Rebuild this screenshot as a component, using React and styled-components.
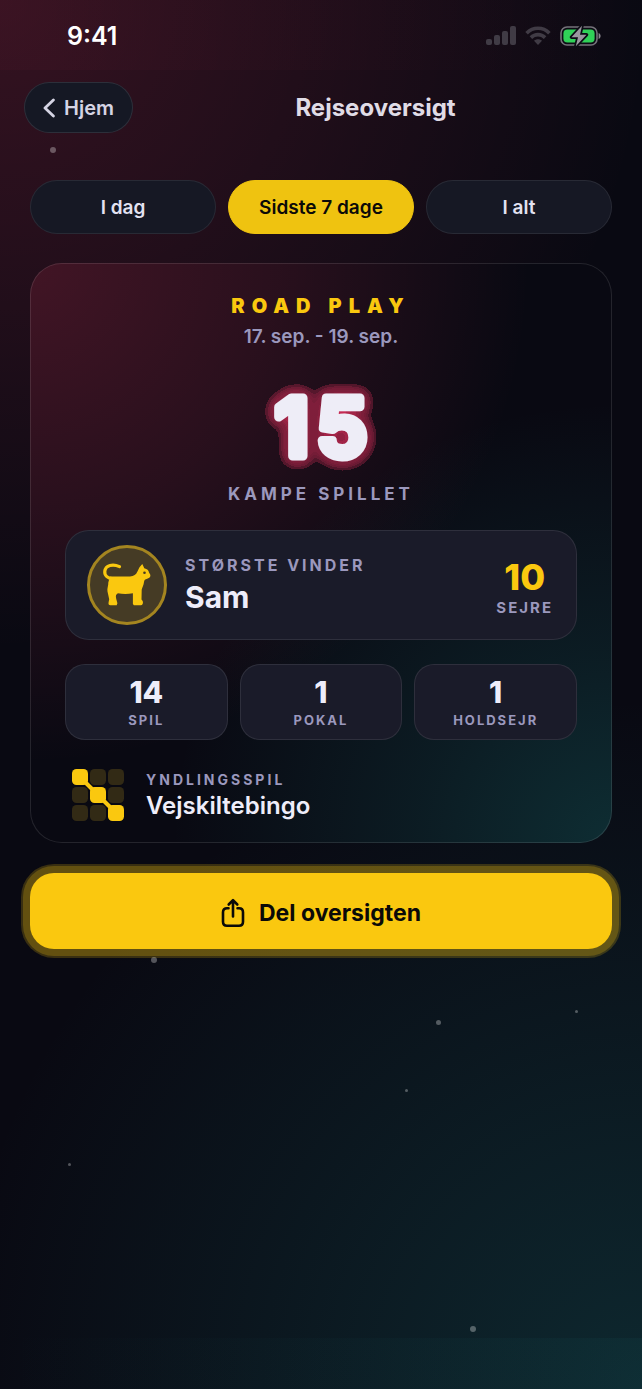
import { useState } from 'react';
import styled, { createGlobalStyle } from 'styled-components';

const GlobalStyle = createGlobalStyle`
  * { box-sizing: border-box; margin: 0; padding: 0; }

  html, body, #root { min-height: 100%; }

  body {
    background: #090912;
    color: #eeedfa;
    font-family: Inter, 'Open Sans', sans-serif;
  }

  button { font-family: inherit; border: none; cursor: pointer; }
`;

const Page = styled.div`
  position: relative;
  min-height: 100vh;
  overflow: hidden;
  background:
    linear-gradient(90deg, rgba(30, 150, 150, 0), rgba(30, 150, 150, 0.06)) 0 100% / 100% 51px no-repeat,
    radial-gradient(circle 650px at 0 0, rgba(255, 60, 100, 0.18), rgba(255, 60, 100, 0.1) 45%, rgba(255, 60, 100, 0)),
    radial-gradient(circle 690px at 100% 100%, rgba(30, 150, 150, 0.22), rgba(30, 150, 150, 0.12) 45%, rgba(30, 150, 150, 0)),
    #090912;
`;

const Star = styled.span`
  position: absolute;
  left: ${p => p.$x}%;
  top: ${p => p.$y}%;
  width: ${p => p.$size}px;
  height: ${p => p.$size}px;
  border-radius: 50%;
  background: rgba(255, 255, 255, 0.3);
`;

const StatusBar = styled.div`
  height: 70px;
  padding: 2px 41px 0 67px;
  display: flex;
  align-items: center;
  justify-content: space-between;
  background: linear-gradient(90deg, rgba(255, 60, 100, 0.03), rgba(255, 60, 100, 0));
`;

const Clock = styled.time`
  font-size: 25px;
  font-weight: 600;
  color: #fff;
`;

const StatusIcons = styled.div`
  display: flex;
  align-items: center;
  gap: 9px;
`;

const Header = styled.header`
  padding: 12px 24px 0;
  display: flex;
  align-items: center;
`;

const BackButton = styled.button`
  height: 51px;
  padding: 0 18px;
  display: flex;
  align-items: center;
  gap: 9px;
  border: 1px solid rgba(255, 255, 255, 0.1);
  border-radius: 26px;
  background: #151824;
  color: #d5d4e4;
  font-size: 20px;
  font-weight: 600;
`;

const Title = styled.h1`
  flex: 1;
  text-align: center;
  font-size: 24px;
  font-weight: 700;
  color: #e0dce6;
`;

const Content = styled.main`
  padding: 47px 30px 0;
`;

const Tabs = styled.div`
  display: grid;
  grid-template-columns: repeat(3, 1fr);
  gap: 12px;
`;

const Tab = styled.button`
  height: 54px;
  border: 1px solid ${p => (p.$active ? '#efc310' : 'rgba(255, 255, 255, 0.08)')};
  border-radius: 27px;
  background: ${p => (p.$active ? '#efc310' : '#161824')};
  color: ${p => (p.$active ? '#0b0a08' : '#e3e2f2')};
  font-size: 19px;
  font-weight: 600;
`;

const Card = styled.section`
  margin-top: 29px;
  padding: 30px 34px 21px;
  border: 1px solid rgba(255, 255, 255, 0.11);
  border-radius: 32px;
  background:
    radial-gradient(circle 500px at 0 0, rgba(255, 60, 100, 0.23), rgba(255, 60, 100, 0.13) 50%, rgba(255, 60, 100, 0)),
    radial-gradient(circle 440px at 100% 100%, rgba(30, 160, 155, 0.24), rgba(30, 160, 155, 0.12) 45%, rgba(30, 160, 155, 0)),
    #090912;
  background-origin: border-box;
`;

const Brand = styled.h2`
  text-align: center;
  font-size: 20px;
  line-height: 24px;
  font-weight: 900;
  letter-spacing: 7px;
  color: #fac80f;
`;

const Dates = styled.p`
  margin-top: 7px;
  text-align: center;
  font-size: 19px;
  line-height: 24px;
  font-weight: 600;
  color: #9b98bd;
`;

const BigNumber = styled.svg`
  display: block;
  width: 160px;
  height: 120px;
  margin: 15px auto 0;
  font-size: 80px;
  font-weight: 600;
  letter-spacing: 8px;
  text-anchor: middle;
  stroke-linejoin: round;
`;

const Label = styled.p`
  font-size: ${p => p.$size}px;
  line-height: ${p => p.$line || 20}px;
  font-weight: 700;
  letter-spacing: ${p => p.$spacing}px;
  text-align: ${p => (p.$center ? 'center' : 'left')};
  text-transform: uppercase;
  color: #9b98bd;
`;

const Panel = styled.div`
  border: 1px solid rgba(255, 255, 255, 0.09);
  border-radius: ${p => p.$radius}px;
  background: #1a1b29;
`;

const Winner = styled(Panel)`
  margin-top: 26px;
  height: 110px;
  padding: 0 21px;
  display: flex;
  align-items: center;
  gap: 18px;
`;

const Avatar = styled.div`
  width: 80px;
  height: 80px;
  border: 3px solid #a48520;
  border-radius: 50%;
  background: #453b25;
  display: flex;
  align-items: center;
  justify-content: center;
`;

const WinnerText = styled.div`
  flex: 1;
`;

const WinnerName = styled.p`
  margin-top: 4px;
  font-size: 30px;
  line-height: 36px;
  font-weight: 700;
`;

const Wins = styled.div`
  padding: 3px 2px 0 0;
  text-align: center;
`;

const WinsCount = styled.p`
  font-size: 36px;
  line-height: 42px;
  font-weight: 800;
  color: #fac80f;
`;

const Stats = styled.div`
  margin-top: 24px;
  display: grid;
  grid-template-columns: repeat(3, 1fr);
  gap: 12px;
`;

const Stat = styled(Panel)`
  height: 76px;
  display: flex;
  flex-direction: column;
  justify-content: center;
  gap: 4px;
`;

const StatValue = styled.p`
  text-align: center;
  font-size: 30px;
  line-height: 32px;
  font-weight: 800;
`;

const Favourite = styled.div`
  margin-top: 29px;
  padding: 0 7px;
  display: flex;
  align-items: center;
  gap: 22px;
`;

const FavouriteName = styled.p`
  margin-top: 2px;
  font-size: 24px;
  line-height: 28px;
  font-weight: 600;
`;

const ShareButton = styled.button`
  width: 100%;
  height: 76px;
  margin-top: 30px;
  padding-top: 4px;
  display: flex;
  align-items: center;
  justify-content: center;
  gap: 14px;
  border-radius: 24px;
  background: #fac80f;
  box-shadow: 0 0 0 7px rgba(250, 200, 15, 0.22), 0 0 0 9px rgba(250, 200, 15, 0.2);
  color: #0b0a08;
  font-size: 23px;
  font-weight: 700;
`;

const stars = [
  { x: 7.8, y: 10.6, size: 6 },
  { x: 23.5, y: 68.9, size: 6 },
  { x: 67.9, y: 73.4, size: 5 },
  { x: 89.6, y: 72.7, size: 3 },
  { x: 63.1, y: 78.4, size: 3 },
  { x: 10.6, y: 83.7, size: 3 },
  { x: 73.2, y: 95.5, size: 6 },
];

const periods = ['I dag', 'Sidste 7 dage', 'I alt'];

const stats = [
  { value: 14, label: 'Spil' },
  { value: 1, label: 'Pokal' },
  { value: 1, label: 'Holdsejr' },
];

function SignalIcon() {
  return (
    <svg width="30" height="20" viewBox="0 0 30 20" fill="#403b45">
      <rect x="0" y="13" width="6" height="6" rx="2" />
      <rect x="8" y="9" width="6" height="10" rx="2" />
      <rect x="16" y="5" width="6" height="14" rx="2" />
      <rect x="24" y="0" width="6" height="19" rx="2" />
    </svg>
  );
}

function WifiIcon() {
  return (
    <svg width="26" height="20" viewBox="0 0 26 20" fill="none" stroke="#403b45" strokeWidth="3.6">
      <path d="M1.6 7.2C8 .6 18 .6 24.4 7.2" />
      <path d="M5.9 11.6c4.1-4 10.1-4 14.2 0" />
      <path d="M9 14.8c2.4-2 5.6-2 8 0L13 19z" fill="#403b45" stroke="none" />
    </svg>
  );
}

function BatteryIcon() {
  return (
    <svg width="41" height="24" viewBox="0 0 41 24">
      <rect x="1" y="3" width="36" height="18" rx="6" fill="#0c0b14" stroke="#76737b" strokeWidth="1.6" />
      <rect x="3.4" y="5.4" width="31.2" height="13.2" rx="4" fill="#30d158" />
      <path d="M38.6 9c2.6.9 2.6 5.1 0 6z" fill="#8b8890" />
      <path d="M22 1.8 11.5 13.2H18l-2.2 9L26.5 10.8H20z" fill="#9a979f" stroke="#0c0b14" strokeWidth="3.4" strokeLinejoin="round" paintOrder="stroke" />
    </svg>
  );
}

function ChevronIcon() {
  return (
    <svg width="12" height="20" viewBox="0 0 12 20" fill="none" stroke="currentColor" strokeWidth="2.8" strokeLinecap="round" strokeLinejoin="round">
      <path d="M10.4 2 2 10l8.4 8" />
    </svg>
  );
}

function CatIcon() {
  return (
    <svg width="52" height="46" viewBox="0 0 52 46" fill="#fac80f">
      <path d="M18.500 4.600C12 1.600 4.500 3 3.800 9.300c-.5 4.400 3.200 7.500 8 7.200" fill="none" stroke="#fac80f" strokeWidth="3.200" strokeLinecap="round" />
      <path d="M9 14.500h20c4 0 6-2 7.300-4.700l2.200-4.500L41.300 2l2 4.200c3 .6 4.300 2.300 4.700 4.300l1.200 2c.8 2-.7 3.700-3 4.200-2 .5-3 1.400-3.200 3.300-.3 3.500-1.800 5.500-2.300 7.800l-.2 9.700 1.200 1.500c.8 2.700-.2 4.200-2 4.200h-6.800l-1-1.200V31.300c-5 .8-10.300.8-15 0-2 1-2.400 2.700-1.700 5.400l1.200 4.500-.7 2H9.400c-1.600 0-2.200-1-1.800-3l.6-3-1.700-7.700c-.6-3 1-6 .8-9z" />
      <circle cx="43.500" cy="10.800" r="1.300" fill="#453b25" />
    </svg>
  );
}

function BingoIcon() {
  const cells = [0, 1, 2].flatMap(row => [0, 1, 2].map(col => ({ row, col })));
  return (
    <svg width="52" height="52" viewBox="0 0 52 52">
      {cells.map(({ row, col }) => (
        <rect
          key={`${row}${col}`}
          x={col * 18}
          y={row * 18}
          width="16"
          height="16"
          rx="4.5"
          fill={row === col ? '#fac80f' : '#322a15'}
        />
      ))}
      <path d="M8 8 44 44" stroke="#fac80f" strokeWidth="4" />
    </svg>
  );
}

function ShareIcon() {
  return (
    <svg width="24" height="30" viewBox="0 0 24 30" fill="none" stroke="currentColor" strokeWidth="2.6" strokeLinecap="round" strokeLinejoin="round">
      <path d="M7.5 10.2H6c-2.500 0-4 1.500-4 4v9.600c0 2.500 1.500 4 4 4h12c2.500 0 4-1.500 4-4v-9.600c0-2.500-1.500-4-4-4h-1.500" />
      <path d="M12 18.500V2.500M7.700 6.500 12 2.200l4.300 4.300" />
    </svg>
  );
}

// the halo is a blur cut into flat alpha steps
function GlowNumber({ value }) {
  return (
    <BigNumber viewBox="0 0 160 120">
      <defs>
        <filter id="halo" x="-40%" y="-40%" width="180%" height="180%" colorInterpolationFilters="sRGB">
          <feGaussianBlur in="SourceAlpha" stdDeviation="7" result="blur" />
          <feComponentTransfer in="blur" result="steps">
            <feFuncA
              type="discrete"
              tableValues="0 0.26 0.38 0.42 0.46 0.46 0.5 0.56 0.56 0.64 0.64 0.72 0.8 0.9"
            />
          </feComponentTransfer>
          <feFlood floodColor="#f03262" />
          <feComposite in2="steps" operator="in" result="tinted" />
          <feGaussianBlur in="tinted" stdDeviation="0.7" result="halo" />
          <feMerge>
            <feMergeNode in="halo" />
            <feMergeNode in="SourceGraphic" />
          </feMerge>
        </filter>
      </defs>
      <text x="84" y="92" fill="#eeedf7" stroke="#eeedf7" strokeWidth="9" filter="url(#halo)">{value}</text>
    </BigNumber>
  );
}

export default function App() {
  const [period, setPeriod] = useState(1);

  return (
    <>
      <GlobalStyle />
      <Page>
        <StatusBar>
          <Clock>9:41</Clock>
          <StatusIcons>
            <SignalIcon />
            <WifiIcon />
            <BatteryIcon />
          </StatusIcons>
        </StatusBar>

        <Header>
          <BackButton><ChevronIcon />Hjem</BackButton>
          <Title>Rejseoversigt</Title>
        </Header>

        <Content>
          <Tabs>
            {periods.map((name, i) => (
              <Tab key={name} $active={i === period} aria-pressed={i === period} onClick={() => setPeriod(i)}>
                {name}
              </Tab>
            ))}
          </Tabs>

          <Card>
            <Brand>ROAD PLAY</Brand>
            <Dates>17. sep. - 19. sep.</Dates>
            <GlowNumber value={15} />
            <Label $size={17} $spacing={4} $center>Kampe spillet</Label>

            <Winner $radius={24}>
              <Avatar><CatIcon /></Avatar>
              <WinnerText>
                <Label $size={16} $spacing={3}>Største vinder</Label>
                <WinnerName>Sam</WinnerName>
              </WinnerText>
              <Wins>
                <WinsCount>10</WinsCount>
                <Label $size={15} $spacing={2} $center>Sejre</Label>
              </Wins>
            </Winner>

            <Stats>
              {stats.map(s => (
                <Stat key={s.label} $radius={20}>
                  <StatValue>{s.value}</StatValue>
                  <Label $size={13} $line={16} $spacing={2} $center>{s.label}</Label>
                </Stat>
              ))}
            </Stats>

            <Favourite>
              <BingoIcon />
              <div>
                <Label $size={14} $spacing={3}>Yndlingsspil</Label>
                <FavouriteName>Vejskiltebingo</FavouriteName>
              </div>
            </Favourite>
          </Card>

          <ShareButton><ShareIcon />Del oversigten</ShareButton>
        </Content>

        {stars.map(s => <Star key={s.x} $x={s.x} $y={s.y} $size={s.size} />)}
      </Page>
    </>
  );
}
